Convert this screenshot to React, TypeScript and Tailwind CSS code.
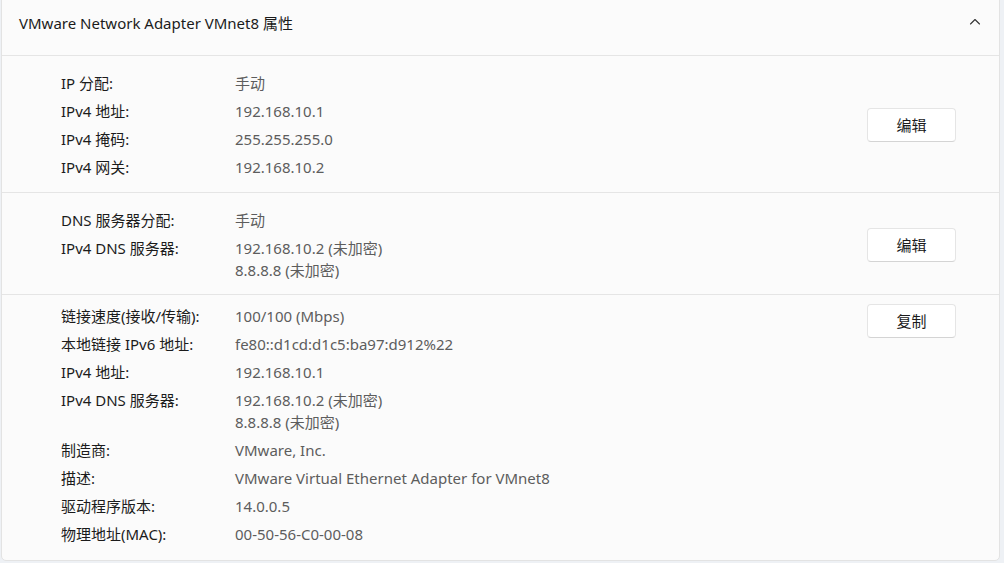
import React from "react";

type Row = { label: string; value: string[] };

const ipRows: Row[] = [
  { label: "IP 分配:", value: ["手动"] },
  { label: "IPv4 地址:", value: ["192.168.10.1"] },
  { label: "IPv4 掩码:", value: ["255.255.255.0"] },
  { label: "IPv4 网关:", value: ["192.168.10.2"] },
];

const dnsRows: Row[] = [
  { label: "DNS 服务器分配:", value: ["手动"] },
  { label: "IPv4 DNS 服务器:", value: ["192.168.10.2 (未加密)", "8.8.8.8 (未加密)"] },
];

const infoRows: Row[] = [
  { label: "链接速度(接收/传输):", value: ["100/100 (Mbps)"] },
  { label: "本地链接 IPv6 地址:", value: ["fe80::d1cd:d1c5:ba97:d912%22"] },
  { label: "IPv4 地址:", value: ["192.168.10.1"] },
  { label: "IPv4 DNS 服务器:", value: ["192.168.10.2 (未加密)", "8.8.8.8 (未加密)"] },
  { label: "制造商:", value: ["VMware, Inc."] },
  { label: "描述:", value: ["VMware Virtual Ethernet Adapter for VMnet8"] },
  { label: "驱动程序版本:", value: ["14.0.0.5"] },
  { label: "物理地址(MAC):", value: ["00-50-56-C0-00-08"] },
];

const Rows = ({ rows }: { rows: Row[] }) => (
  <div className="flex flex-col">
    {rows.map((r, i) => (
      <div key={i} className="flex py-[3px] leading-[22px]">
        <div className="w-[174px] shrink-0 text-[#1b1b1b]">{r.label}</div>
        <div className="flex flex-col text-[#5d5d5d]">
          {r.value.map((v, j) => (
            <span key={j}>{v}</span>
          ))}
        </div>
      </div>
    ))}
  </div>
);

const Btn = ({ children }: { children: React.ReactNode }) => (
  <button className="w-[89px] h-[34px] rounded-[4px] bg-white border border-[#e5e5e5] border-b-[#d4d4d4] text-[15px] text-[#1b1b1b]">
    {children}
  </button>
);

export default function App() {
  return (
    <div
      className="w-[1004px] h-[563px] bg-[#eef1f5] overflow-hidden text-[15px]"
      style={{ fontFamily: '"Segoe UI", "Noto Sans", "Noto Sans CJK SC", sans-serif' }}
    >
      <div className="ml-[1px] mr-[4px] -mt-[4px] h-[565px] rounded-b-[5px] bg-[#fbfbfb] border border-[#e3e3e3] flex flex-col">
        {/* header */}
        <div className="h-[59px] pt-[15px] flex items-start justify-between pl-[17px] pr-[16px] border-b border-[#e5e5e5]">
          <span className="text-[#1b1b1b] leading-[22px]">VMware Network Adapter VMnet8 属性</span>
          <svg width="12" height="12" viewBox="0 0 12 12" className="mr-[2px] mt-[4px]">
            <path d="M1.5 8 L6 3.5 L10.5 8" fill="none" stroke="#333" strokeWidth="1.1" strokeLinecap="round" strokeLinejoin="round" />
          </svg>
        </div>

        {/* IP */}
        <div className="flex items-center justify-between pl-[59px] pr-[43px] pt-[13px] pb-[11px] border-b border-[#e5e5e5]">
          <Rows rows={ipRows} />
          <Btn>编辑</Btn>
        </div>

        {/* DNS */}
        <div className="flex items-center justify-between pl-[59px] pr-[43px] pt-[13px] pb-[10px] border-b border-[#e5e5e5]">
          <Rows rows={dnsRows} />
          <Btn>编辑</Btn>
        </div>

        {/* info */}
        <div className="flex items-start justify-between pl-[59px] pr-[43px] pt-[7px] pb-[11px]">
          <Rows rows={infoRows} />
          <div className="mt-[2px]">
            <Btn>复制</Btn>
          </div>
        </div>
      </div>
    </div>
  );
}
